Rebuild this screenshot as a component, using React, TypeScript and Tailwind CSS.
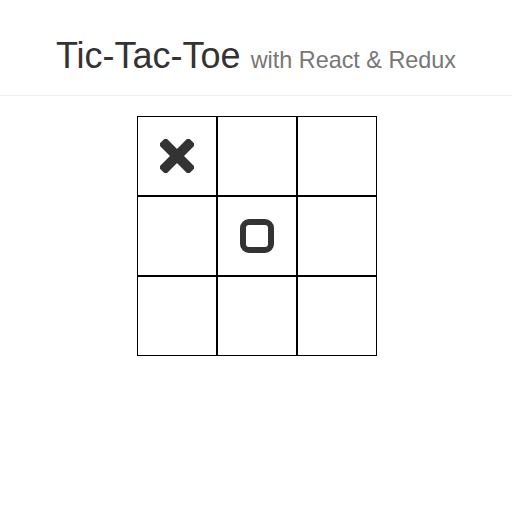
import React from 'react';

type Mark = 'X' | 'O' | null;

const board: Mark[] = ['X', null, null, null, 'O', null, null, null, null];

const XMark: React.FC = () => (
  <svg width="34" height="34" viewBox="0 0 34 34" className="text-[#333]">
    <g fill="currentColor" transform="rotate(45 17 17)">
      <rect x="12" y="-4" width="10" height="42" rx="1.5" />
      <rect x="-4" y="12" width="42" height="10" rx="1.5" />
    </g>
  </svg>
);

const OMark: React.FC = () => (
  <svg width="34" height="34" viewBox="0 0 34 34" className="text-[#333]">
    <rect x="3" y="3" width="28" height="28" rx="6" fill="none" stroke="currentColor" strokeWidth="6" />
  </svg>
);

const Cell: React.FC<{ mark: Mark }> = ({ mark }) => (
  <div className="w-[80px] h-[80px] border border-black flex items-center justify-center">
    {mark === 'X' && <XMark />}
    {mark === 'O' && <OMark />}
  </div>
);

export default function App() {
  return (
    <div className="min-h-[512px] bg-white" style={{ fontFamily: '"Liberation Sans", Arial, sans-serif' }}>
      <div className="pt-[36px] pb-[19px] border-b border-[#eee] text-center">
        <h1 className="text-[36px] leading-[40px] text-[#333]">
          Tic-Tac-Toe <small className="text-[23.4px] leading-none text-[#777]">with React &amp; Redux</small>
        </h1>
      </div>
      <div className="flex justify-center pl-[2px] mt-[20px]">
        <div className="grid grid-cols-3 w-[240px]">
          {board.map((m, i) => (
            <Cell key={i} mark={m} />
          ))}
        </div>
      </div>
    </div>
  );
}
